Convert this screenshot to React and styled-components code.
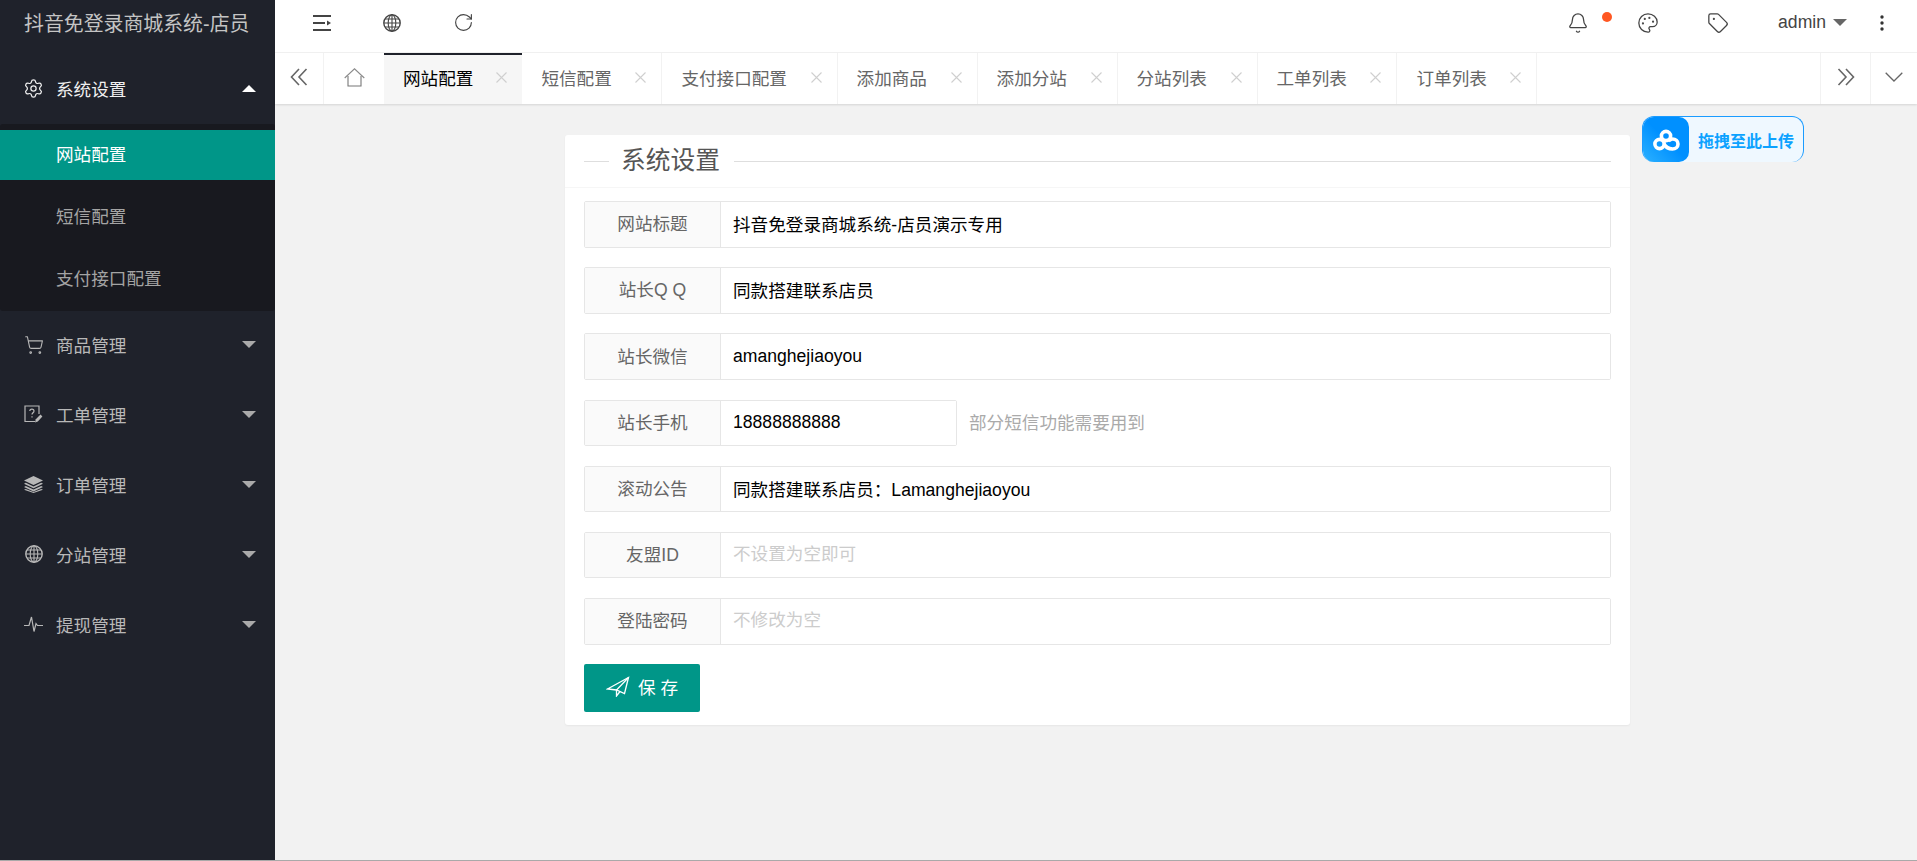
import React from 'react';
import styled, { createGlobalStyle } from 'styled-components';
import { Settings, ShoppingCart, Bell, Palette, Tag, RotateCw } from 'lucide-react';

const GlobalStyle = createGlobalStyle`
  html, body {
    margin: 0;
    padding: 0;
    height: 100%;
    overflow: hidden;
    background: #f2f2f2;
    font-family: "Liberation Sans", "Noto Sans CJK SC", sans-serif;
    font-size: 17.6px;
  }
  * { box-sizing: border-box; }
`;

const Page = styled.div`
  display: flex;
  height: 861px;
  border-bottom: 1px solid #a9a9a9;
`;

const Sidebar = styled.aside`
  width: 275px;
  flex-shrink: 0;
  background: #1f222b;
  color: #c2c2c2;
`;

const Brand = styled.div`
  height: 54px;
  padding: 0 0 10px 24px;
  display: flex;
  align-items: center;
  font-size: 19.9px;
  color: #c4c4c4;
  white-space: nowrap;
`;

const MenuItem = styled.div`
  height: ${({ $open }) => ($open ? '70px' : '69.8px')};
  padding: 0 19px 2px 24px;
  display: flex;
  align-items: center;
  gap: 13px;
  color: ${({ $open }) => ($open ? '#f0f0f0' : '#b8b8b8')};
  svg { flex-shrink: 0; }
`;

const IconSlot = styled.span`
  width: 19px;
  display: flex;
  justify-content: center;
`;

const MenuText = styled.span`
  flex: 1;
`;

const Caret = styled.i`
  width: 0;
  height: 0;
  border-left: 7px solid transparent;
  border-right: 7px solid transparent;
  ${({ $up, $color }) =>
    $up
      ? `border-bottom: 7px solid ${$color};`
      : `border-top: 7px solid ${$color};`}
`;

const SubMenu = styled.div`
  height: 187px;
  background: #18191f;
  border-radius: 3px;
`;

const SubItem = styled.div`
  height: 62px;
  padding: 6px 0;
`;

const SubLink = styled.div`
  height: 50px;
  padding: 0 0 3px 56px;
  display: flex;
  align-items: center;
  color: ${({ $active }) => ($active ? '#fff' : '#a4a4a4')};
  background: ${({ $active }) => ($active ? '#009688' : 'transparent')};
`;

const Main = styled.main`
  flex: 1;
  min-width: 0;
  display: flex;
  flex-direction: column;
  position: relative;
`;

const TopBar = styled.header`
  height: 53px;
  background: #fff;
  border-bottom: 1px solid #f2f2f2;
  display: flex;
  align-items: center;
  padding-bottom: 7px;
  color: #444;
`;

const TopLeft = styled.div`
  display: flex;
  align-items: center;
  padding-left: 38px;
  gap: 52px;
  flex: 1;
`;

const TopRight = styled.div`
  display: flex;
  align-items: center;
`;

const TopIcon = styled.span`
  width: ${({ $w }) => $w}px;
  display: flex;
  justify-content: center;
  position: relative;
`;

const Dot = styled.i`
  position: absolute;
  top: 0;
  right: 1px;
  width: 10px;
  height: 10px;
  border-radius: 50%;
  background: #ff5722;
`;

const UserName = styled.span`
  font-size: 17.6px;
  color: #444;
  margin: 0 7px 0 25px;
  line-height: 1;
`;

const TabBar = styled.nav`
  height: 51px;
  background: #fff;
  display: flex;
  box-shadow: 0 1px 2px rgba(0, 0, 0, 0.12);
  position: relative;
  color: #666;
`;

const EdgeCell = styled.div`
  width: ${({ $w }) => $w}px;
  flex-shrink: 0;
  display: flex;
  align-items: center;
  justify-content: center;
  padding-bottom: 3px;
  border-left: ${({ $left }) => ($left ? '1px solid #f2f2f2' : 'none')};
  border-right: ${({ $right }) => ($right ? '1px solid #f2f2f2' : 'none')};
  color: #666;
`;

const Tabs = styled.div`
  flex: 1;
  display: flex;
  min-width: 0;
`;

const Tab = styled.div`
  display: flex;
  align-items: center;
  padding: 0 15px 2px 19px;
  gap: ${({ $active }) => ($active ? '23px' : '23.6px')};
  white-space: nowrap;
  border-right: ${({ $active }) => ($active ? 'none' : '1px solid #f2f2f2')};
  color: ${({ $active }) => ($active ? '#000' : '#666')};
  background: ${({ $active }) => ($active ? '#f6f6f6' : '#fff')};
  position: relative;
  ${({ $active }) =>
    $active &&
    `&::after {
      content: '';
      position: absolute;
      left: 0;
      right: 0;
      top: 0;
      height: 2px;
      background: #1f222b;
    }`}
`;

const Content = styled.section`
  flex: 1;
  padding: 31px 287px 0 290px;
  position: relative;
`;

const Card = styled.div`
  background: #fff;
  border-radius: 3px;
  box-shadow: 0 1px 2px rgba(0, 0, 0, 0.05);
  height: 590px;
`;

const CardHead = styled.div`
  height: 53px;
  padding: 0 19px;
  border-bottom: 1px solid #f6f6f6;
  display: flex;
  align-items: center;
`;

const Rule = styled.i`
  height: 1px;
  background: #dedede;
  flex: ${({ $grow }) => ($grow ? 1 : '0 0 25px')};
`;

const CardTitle = styled.h2`
  margin: 0 14px 0 12px;
  font-weight: 400;
  font-size: 24.75px;
  color: #555;
  line-height: 1;
`;

const Form = styled.form`
  padding: 13px 19px 0;
`;

const Row = styled.div`
  display: flex;
  align-items: center;
  height: 46.5px;
  margin-bottom: 19.7px;
`;

const Group = styled.div`
  display: flex;
  height: 100%;
  min-width: 0;
  flex: ${({ $short }) => ($short ? '0 0 373px' : 1)};
  border: 1px solid #e6e6e6;
  border-radius: 2px;
`;

const Label = styled.label`
  width: 136px;
  flex-shrink: 0;
  padding-bottom: 3px;
  display: flex;
  align-items: center;
  justify-content: center;
  background: #fafafa;
  border-right: 1px solid #e6e6e6;
  color: #666;
  white-space: nowrap;
`;

const Field = styled.input`
  flex: 1;
  min-width: 0;
  border: 0;
  outline: 0;
  background: #fff;
  padding: 0 12px 1px;
  font: inherit;
  color: #000;
  &::placeholder { color: #ccc; opacity: 1; }
`;

const Hint = styled.span`
  margin-left: 12px;
  padding-bottom: 3px;
  color: #aaa;
`;

const SaveButton = styled.button`
  width: 116px;
  height: 48px;
  padding: 0 0 3px 5px;
  border: 0;
  border-radius: 2px;
  background: #009688;
  color: #fff;
  font: inherit;
  display: flex;
  align-items: center;
  justify-content: center;
  gap: 8px;
  letter-spacing: 5px;
`;

const UploadWidget = styled.div`
  position: absolute;
  top: 116px;
  left: 1367px;
  width: 162px;
  height: 46px;
  display: flex;
  align-items: stretch;
  background: #eff8ff;
  border: 1px solid #1b9bff;
  border-bottom: 0;
  border-radius: 12px;
  overflow: hidden;
`;

const UploadIcon = styled.div`
  width: 46px;
  background: linear-gradient(45deg, #2cb1ff, #0090ff 50%);
  display: flex;
  align-items: center;
  justify-content: center;
  border-radius: 0 10px 10px 0;
`;

const UploadText = styled.div`
  flex: 1;
  display: flex;
  align-items: center;
  justify-content: center;
  color: #0ca2ff;
  font-size: 16px;
  font-weight: 700;
  white-space: nowrap;
`;

const MenuFoldIcon = () => (
  <svg width="18" height="16" viewBox="0 0 18 16" fill="currentColor">
    <rect x="0" y="0" width="18" height="2" />
    <rect x="0" y="7" width="12" height="2" />
    <rect x="0" y="14" width="18" height="2" />
    <path d="M14 5.5 L18 8 L14 10.5 Z" />
  </svg>
);

const GlobeGrid = ({ size = 18 }) => (
  <svg width={size} height={size} viewBox="0 0 18 18" fill="none" stroke="currentColor" strokeWidth="1.1">
    <circle cx="9" cy="9" r="8.2" strokeWidth="1.4" />
    <ellipse cx="9" cy="9" rx="3.8" ry="8.2" />
    <path d="M9 1 V17 M1 9 H17 M2 5 H16 M2 13 H16" />
  </svg>
);

const DoubleLeft = () => (
  <svg width="18" height="18" viewBox="0 0 18 18" fill="none" stroke="currentColor" strokeWidth="1.6">
    <path d="M9 1 L1.5 9 L9 17 M16.5 1 L9 9 L16.5 17" />
  </svg>
);

const DoubleRight = () => (
  <svg width="18" height="18" viewBox="0 0 18 18" fill="none" stroke="currentColor" strokeWidth="1.6">
    <path d="M1.5 1 L9 9 L1.5 17 M9 1 L16.5 9 L9 17" />
  </svg>
);

const ArrowDown = () => (
  <svg width="18" height="10" viewBox="0 0 18 10" fill="none" stroke="currentColor" strokeWidth="1.3">
    <path d="M0.7 0.7 L9 9 L17.3 0.7" />
  </svg>
);

const HomeOutline = () => (
  <svg width="21" height="19" viewBox="0 0 21 19" fill="none" stroke="#8a8a8a" strokeWidth="1.1">
    <path d="M0.7 10 L10.5 0.8 L20.3 10" />
    <path d="M4 8 V18 H17 V8" stroke="#777" />
  </svg>
);

const CloseIcon = () => (
  <svg width="11" height="11" viewBox="0 0 11 11" fill="none" stroke="#cfcfcf" strokeWidth="1.1">
    <path d="M0.5 0.5 L10.5 10.5 M10.5 0.5 L0.5 10.5" />
  </svg>
);

const CartIcon = () => <ShoppingCart size={20} strokeWidth={1.3} />;

const TicketIcon = () => (
  <svg width="19" height="19" viewBox="0 0 19 19" fill="none" stroke="currentColor" strokeWidth="1.2">
    <path d="M11 16.5 H1 V1 H15 V9" />
    <path d="M5.8 6 C5.8 3.4 10 3.4 10 6 C10 7.8 8 7.8 8 9.6" />
    <path d="M8 11.2 V12.6" />
    <path d="M11 17.5 L11.8 14.2 L16.5 9.6 L18.4 11.5 L13.8 16.4 Z" fill="currentColor" stroke="none" />
  </svg>
);

const LayersIcon = () => (
  <svg width="19" height="17" viewBox="0 0 19 17" fill="currentColor">
    <path d="M9.5 0 L19 4.5 L9.5 9 L0 4.5 Z" />
    <path d="M1.8 6.8 L9.5 10.4 L17.2 6.8 L19 7.8 L9.5 12.2 L0 7.8 Z" />
    <path d="M1.8 10 L9.5 13.6 L17.2 10 L19 11 L9.5 15.4 L0 11 Z" />
    <path d="M1.8 13 L9.5 16 L17.2 13 L19 13.8 L9.5 17 L0 13.8 Z" />
  </svg>
);

const PulseIcon = () => (
  <svg width="19" height="17" viewBox="0 0 19 17" fill="none" stroke="currentColor" strokeWidth="1.2">
    <path d="M0 9.5 H5 L7.5 1 L10 15.5 L12 7.5 L13.5 9.5 H19" />
  </svg>
);

const PlaneIcon = () => (
  <svg width="24" height="21" viewBox="0 0 24 21" fill="none" stroke="#fff" strokeWidth="1.3">
    <path d="M1.5 13 L22.5 1.5 L18.5 17.5 L10.5 14 Z" />
    <path d="M22.5 1.5 L10.5 14 V20 L14 15.5" />
  </svg>
);

const CloudLogo = () => (
  <svg width="27" height="22" viewBox="0 0 27 22" fill="none" stroke="#fff" strokeWidth="3.6">
    <circle cx="13" cy="7" r="4.6" />
    <circle cx="6.5" cy="15" r="4.6" />
    <path d="M11 15 C13 18.5 16 20 19.5 20 C22.5 20 25 18 25 15 C25 12 22.5 10 19.5 10 C18 10 16.8 10.8 15.5 12" />
  </svg>
);

const sideMenus = [
  { name: '商品管理', Icon: CartIcon },
  { name: '工单管理', Icon: TicketIcon },
  { name: '订单管理', Icon: LayersIcon },
  { name: '分站管理', Icon: GlobeGrid },
  { name: '提现管理', Icon: PulseIcon },
];

const tabs = ['短信配置', '支付接口配置', '添加商品', '添加分站', '分站列表', '工单列表', '订单列表'];

const rows = [
  { label: '网站标题', value: '抖音免登录商城系统-店员演示专用' },
  { label: '站长Q Q', value: '同款搭建联系店员' },
  { label: '站长微信', value: 'amanghejiaoyou' },
  { label: '站长手机', value: '18888888888', short: true, hint: '部分短信功能需要用到' },
  { label: '滚动公告', value: '同款搭建联系店员：Lamanghejiaoyou' },
  { label: '友盟ID', placeholder: '不设置为空即可' },
  { label: '登陆密码', placeholder: '不修改为空' },
];

export default function App() {
  return (
    <>
      <GlobalStyle />
      <Page>
        <Sidebar>
          <Brand>抖音免登录商城系统-店员</Brand>
          <MenuItem $open>
            <IconSlot>
              <Settings size={21} strokeWidth={1.4} />
            </IconSlot>
            <MenuText>系统设置</MenuText>
            <Caret $up $color="#fff" />
          </MenuItem>
          <SubMenu>
            <SubItem>
              <SubLink $active>网站配置</SubLink>
            </SubItem>
            <SubItem>
              <SubLink>短信配置</SubLink>
            </SubItem>
            <SubItem>
              <SubLink>支付接口配置</SubLink>
            </SubItem>
          </SubMenu>
          {sideMenus.map(({ name, Icon }) => (
            <MenuItem key={name}>
              <IconSlot>
                <Icon />
              </IconSlot>
              <MenuText>{name}</MenuText>
              <Caret $color="#aaa" />
            </MenuItem>
          ))}
        </Sidebar>
        <Main>
          <TopBar>
            <TopLeft>
              <MenuFoldIcon />
              <GlobeGrid />
              <RotateCw size={21} strokeWidth={1.3} />
            </TopLeft>
            <TopRight>
              <TopIcon $w={70}>
                <Bell size={22} strokeWidth={1.4} />
                <Dot />
              </TopIcon>
              <TopIcon $w={70}>
                <Palette size={22} strokeWidth={1.4} />
              </TopIcon>
              <TopIcon $w={70}>
                <Tag size={22} strokeWidth={1.4} />
              </TopIcon>
              <UserName>admin</UserName>
              <Caret $color="#666" />
              <TopIcon $w={70}>
                <svg width="4" height="16" viewBox="0 0 4 16" fill="#333">
                  <circle cx="2" cy="2" r="1.7" />
                  <circle cx="2" cy="8" r="1.7" />
                  <circle cx="2" cy="14" r="1.7" />
                </svg>
              </TopIcon>
            </TopRight>
          </TopBar>
          <TabBar>
            <EdgeCell $w={49} $right>
              <DoubleLeft />
            </EdgeCell>
            <EdgeCell $w={60}>
              <HomeOutline />
            </EdgeCell>
            <Tabs>
              <Tab $active>
                网站配置
                <CloseIcon />
              </Tab>
              {tabs.map((t) => (
                <Tab key={t}>
                  {t}
                  <CloseIcon />
                </Tab>
              ))}
            </Tabs>
            <EdgeCell $w={50} $left>
              <DoubleRight />
            </EdgeCell>
            <EdgeCell $w={47} $left>
              <ArrowDown />
            </EdgeCell>
          </TabBar>
          <Content>
            <Card>
              <CardHead>
                <Rule />
                <CardTitle>系统设置</CardTitle>
                <Rule $grow />
              </CardHead>
              <Form>
                {rows.map((r) => (
                  <Row key={r.label}>
                    <Group $short={r.short}>
                      <Label>{r.label}</Label>
                      <Field defaultValue={r.value} placeholder={r.placeholder} />
                    </Group>
                    {r.hint && <Hint>{r.hint}</Hint>}
                  </Row>
                ))}
                <SaveButton type="button">
                  <PlaneIcon />
                  保存
                </SaveButton>
              </Form>
            </Card>
          </Content>
          <UploadWidget>
            <UploadIcon>
              <CloudLogo />
            </UploadIcon>
            <UploadText>拖拽至此上传</UploadText>
          </UploadWidget>
        </Main>
      </Page>
    </>
  );
}
